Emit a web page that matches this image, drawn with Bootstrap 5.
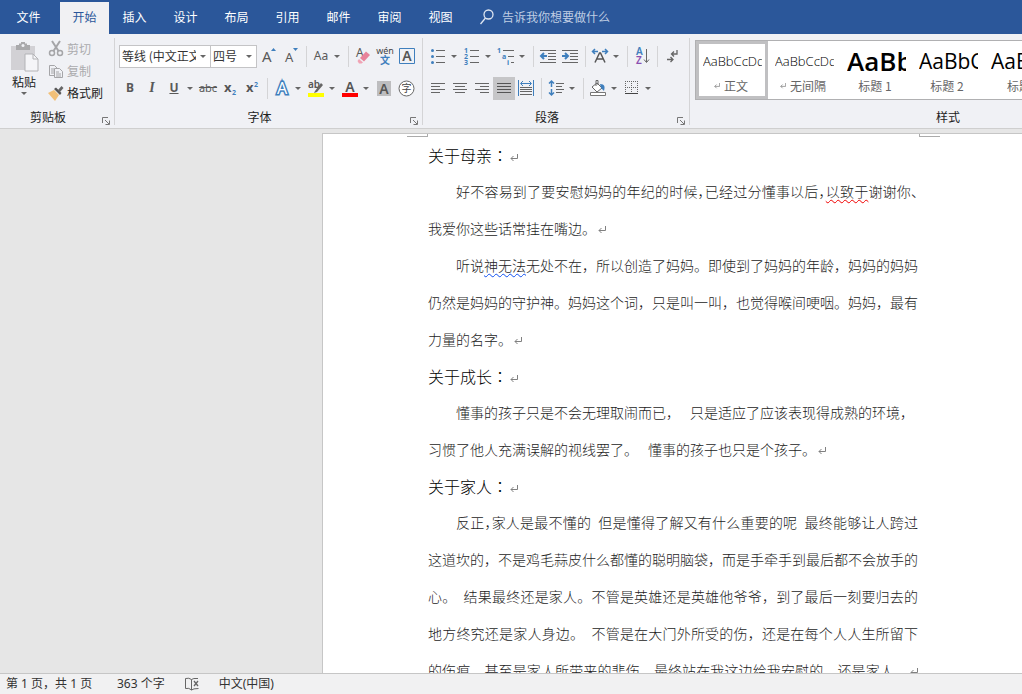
<!DOCTYPE html>
<html lang="zh-CN">
<head>
<meta charset="utf-8">
<meta name="viewport" content="width=device-width, initial-scale=1">
<title>Word</title>
<link href="https://cdn.jsdelivr.net/npm/bootstrap@5.3.0/dist/css/bootstrap.min.css" rel="stylesheet">
<script src="https://cdn.jsdelivr.net/npm/bootstrap@5.3.0/dist/js/bootstrap.bundle.min.js"></script>
<style>
  :root { --blue:#2b579a; --ink:#595959; --accent:#3f7fbd; --line:#d4d4d6; }
  body { font-family:"Noto Sans CJK SC",sans-serif; font-size:12px; line-height:16px; color:#222; background:#e6e6e6; }
  button { font:inherit; color:inherit; }
  svg { display:block; flex:none; overflow:visible; }
  svg text { font-family:"Noto Sans","Noto Sans CJK SC",sans-serif; }

  /* tab strip */
  .tabstrip { background:var(--blue); height:34px; }
  .tabstrip .nav-link { width:51px; padding:0; height:32px; line-height:30px; color:#fff; text-align:center; border-radius:0; }
  .tabstrip .nav-link.file-tab { width:57px; margin-right:3px; }
  .tabstrip .nav-link.active { width:49px; background:#f1f1f3; color:var(--blue); }
  .tellme { color:#bfcde3; padding-left:13px; gap:7px; }
  .tellme input { width:140px; padding:0; border:0; outline:0; background:none; color:inherit; }
  .tellme input::placeholder { color:#bfcde3; opacity:1; }

  /* ribbon */
  .ribbon { background:#f0f1f5; height:95px; border-bottom:1px solid #cfcfcf; padding-top:4px; }
  .rgroup { position:relative; border-right:1px solid var(--line); height:87px; }
  .rgroup .caption { position:absolute; left:0; right:0; bottom:0; text-align:center; }
  .launcher { position:absolute; right:4px; bottom:0; padding:0; border:0; background:none; }
  .clip-group { width:115px; }
  .clip-group .caption { right:18px; }
  .font-group { width:308px; padding-left:4px; }
  .font-group .caption { right:18px; }
  .para-group { width:267px; padding-left:4px; }
  .para-group .caption { right:18px; }
  .style-group { width:516px; padding:2px 0 0 5px; border-right:0; }
  .tool-row { height:32px; padding-top:4px; }
  .tb { width:22px; height:23px; padding:0; border:0; background:none; color:var(--ink); display:flex; align-items:center; justify-content:center; font-family:"Noto Sans",sans-serif; flex:none; }
  .tb.on { background:#c6c6c8; }
  .tb .italic-mark { font-family:"Liberation Serif",serif; font-size:14px; font-weight:bold; }
  .tb .strike-mark { font-size:11px; }
  .drop { width:12px; padding-left:2px; justify-content:start; }
  .drop::before, .paste-btn::after { content:""; border:3px solid transparent; border-top-color:#666; border-bottom:0; }
  .vsep { width:8px; height:21px; flex:none; background:linear-gradient(var(--line),var(--line)) center/1px 100% no-repeat; }
  .combo { position:relative; height:23px; margin-right:-1px; }
  .combo select { appearance:none; width:100%; height:23px; padding:0 14px 0 2px; border:1px solid #c4c4c6; border-radius:0; background:#fff; color:#333; overflow:hidden; }
  .combo::after { content:""; position:absolute; right:5px; top:10px; border:3px solid transparent; border-top-color:#666; border-bottom:0; pointer-events:none; }
  .combo-font { width:92px; } .combo-size { width:47px; margin-right:1px; }
  .paste-btn { width:48px; padding:2px 0 0 0; border:0; background:none; display:flex; flex-direction:column; align-items:center; gap:2px; }
  .clip-btn { height:22px; padding:0; border:0; background:none; display:flex; align-items:center; gap:3px; }
  .clip-btn:disabled { color:#ababad; }

  .gallery { background:#fff; border:1px solid #b0b0b2; height:60px; }
  .style-item { width:72px; height:58px; padding:0 4px 1px; border:3px solid transparent; background:none; display:flex; flex-direction:column; justify-content:end; flex:none; color:#666; }
  .style-item.on { border-color:#c0c0c2; }
  .sample { width:59px; height:34px; line-height:34px; overflow:hidden; white-space:nowrap; text-align:left; color:#000; font-family:"Open Sans",sans-serif; font-size:13px; font-weight:300; }
  .sample.h-one { font-size:26px; font-weight:600; }
  .sample.h-two { font-size:21px; font-weight:400; }
  .style-name { width:56px; height:20px; line-height:18px; display:flex; align-items:center; justify-content:center; gap:4px; white-space:nowrap; }

  /* document */
  .workspace { padding-top:4px; }
  .sheet { width:700px; flex:none; background:#fff; border:1px solid #c6c6c6; border-width:1px 0 0 1px; padding:3px 105px 0; position:relative; color:#1c1c1c; font-size:14px; font-weight:300; }
  .sheet::before, .sheet::after { content:""; position:absolute; top:0; width:21px; height:3px; border:1px solid #ababab; border-top:0; }
  .sheet::before { left:84px; border-left:0; }
  .sheet::after { left:596px; border-right:0; }
  .sheet h2 { margin:0; height:36px; line-height:36px; font-size:16px; font-weight:300; color:#000; white-space:nowrap; }
  .sheet p { margin:0; width:490px; }
  .ln { display:block; height:37px; line-height:37px; white-space:nowrap; }
  .full { text-align:justify; text-align-last:justify; }
  .indent { padding-left:28px; }
  .half { font-feature-settings:"halt"; }
  .colon { font-family:"Noto Sans CJK JP",sans-serif; }
  .ret { display:inline-block; margin-left:2px; }
  .wave { text-decoration:underline wavy 1px; text-underline-offset:2px; text-decoration-skip-ink:none; }
  .wave-red { text-decoration-color:#f00000; }
  .wave-blue { text-decoration-color:#1050f0; }

  .statusbar { height:21px; background:#f1f1f2; border-top:1px solid #c6c6c6; padding-left:6px; gap:20px; color:#333; font-family:"Noto Sans","Noto Sans CJK SC",sans-serif; }
  .statusbar .pages { min-width:91px; }
</style>
</head>
<body class="vh-100 overflow-hidden d-flex flex-column">
<svg width="0" height="0" class="position-absolute">
  <symbol id="ret" viewBox="0 0 8 8"><path d="M7.500 0v4.500H1M3.500 2L1 4.500 3.500 7" fill="none" stroke="#808080"/></symbol>
  <symbol id="launch" viewBox="0 0 8 8"><path d="M.5 6V.5H6M3 3l4 4M7.500 3.500v4h-4" fill="none" stroke="#777"/></symbol>
</svg>

<nav class="tabstrip nav flex-nowrap align-items-end flex-shrink-0">
  <a class="nav-link file-tab" href="#">文件</a>
  <a class="nav-link active" href="#">开始</a>
  <a class="nav-link" href="#">插入</a>
  <a class="nav-link" href="#">设计</a>
  <a class="nav-link" href="#">布局</a>
  <a class="nav-link" href="#">引用</a>
  <a class="nav-link" href="#">邮件</a>
  <a class="nav-link" href="#">审阅</a>
  <a class="nav-link" href="#">视图</a>
  <label class="tellme d-flex align-items-center align-self-center">
    <svg width="16" height="16" viewBox="0 0 16 16" fill="none" stroke="#dfe6f1" stroke-width="1.300"><circle cx="9.500" cy="5.500" r="4.500"/><path d="M6.500 9L1.500 15"/></svg>
    <input type="text" placeholder="告诉我你想要做什么" aria-label="告诉我你想要做什么">
  </label>
</nav>

<header class="ribbon d-flex flex-shrink-0 overflow-hidden">
  <section class="rgroup clip-group flex-shrink-0 d-flex align-items-start">
    <button class="paste-btn" type="button">
      <svg width="30" height="32" viewBox="0 0 30 32"><path d="M2 6h24v24H2z" fill="#d2d1d5"/><path d="M7 5h3V3.500h2V2h4v1.500h2V5h3v5H7z" fill="#a9a9ab"/><circle cx="14" cy="5.500" r="1.500" fill="#f0f1f5"/><path d="M16 14h8l5 5v12H16z" fill="#f5f5f8" stroke="#b3b3b6"/><path d="M24 14v5h5" fill="none" stroke="#b3b3b6"/></svg>
      <span>粘贴</span>
    </button>
    <div>
      <button class="clip-btn" type="button" disabled>
        <svg width="16" height="16" viewBox="0 0 16 16" fill="none" stroke="#a5a5a8" stroke-width="1.500"><path d="M4 0l6.500 10M12 0L5.500 10" stroke-width="2"/><circle cx="4" cy="12" r="2.500"/><circle cx="12" cy="12" r="2.500"/></svg>剪切</button>
      <button class="clip-btn" type="button" disabled>
        <svg width="16" height="16" viewBox="0 0 16 16" fill="#f0f1f5" stroke="#a5a5a8"><path d="M1.500 2.500h5l3 3v7h-8z"/><path d="M3 6h3M3 8h3M3 10h3"/><path d="M6.500 5.500h5l3 3v6h-8z"/><path d="M8 9h3M8 11h5M8 13h5"/></svg>复制</button>
      <button class="clip-btn" type="button">
        <svg width="16" height="16" viewBox="0 0 16 16"><path d="M0 8l6-3 5 5-4 6z" fill="#f2c078"/><path d="M6 4l2-1.500 5.500 5.500L12 10z" fill="#555"/><path d="M10 5l3.500-4 2 2L12 7z" fill="#666"/></svg>格式刷</button>
    </div>
    <span class="caption">剪贴板</span>
    <button class="launcher" type="button" aria-label="剪贴板"><svg width="8" height="8"><use href="#launch"/></svg></button>
  </section>

  <section class="rgroup font-group flex-shrink-0">
    <div class="tool-row d-flex align-items-center">
      <div class="combo combo-font"><select aria-label="字体"><option>等线 (中文正文)</option></select></div>
      <div class="combo combo-size"><select aria-label="字号"><option>四号</option></select></div>
      <button class="tb" type="button" aria-label="增大字号"><svg width="18" height="20"><text x="2" y="16" font-size="15" fill="#595959">A</text><path d="M11 5l2.500-3L16 5z" fill="#3f7fbd"/></svg></button>
      <button class="tb" type="button" aria-label="减小字号"><svg width="18" height="20"><text x="3" y="16" font-size="13" fill="#595959">A</text><path d="M11 2h5l-2.500 3z" fill="#3f7fbd"/></svg></button>
      <i class="vsep"></i>
      <button class="tb" type="button" aria-label="更改大小写"><span>Aa</span></button><button class="tb drop" type="button" aria-label="大小写选项"></button>
      <i class="vsep"></i>
      <button class="tb" type="button" aria-label="清除格式"><svg width="18" height="18"><text x="2" y="10" font-size="12" fill="#595959">A</text><path d="M6 11l6-6.500 4 3.500-6 6.500z" fill="#e8829a"/><path d="M5 12l4 3.500-1.500 1H5L3.500 14z" fill="#f0a3b4"/></svg></button>
      <button class="tb" type="button" aria-label="拼音指南"><svg width="18" height="20"><text x="9" y="8" font-size="9" text-anchor="middle" fill="#444">wén</text><text x="4" y="18" font-size="10" fill="#3f7fbd" font-weight="bold">文</text></svg></button>
      <button class="tb" type="button" aria-label="字符边框"><svg width="16" height="16"><path d="M.5.5h15v15H.5z" fill="none" stroke="#3f7fbd"/><text x="8" y="13" font-size="14" font-weight="600" text-anchor="middle" fill="#555">A</text></svg></button>
    </div>
    <div class="tool-row d-flex align-items-center">
      <button class="tb" type="button"><b>B</b></button>
      <button class="tb" type="button"><i class="italic-mark">I</i></button>
      <button class="tb" type="button"><b><u>U</u></b></button><button class="tb drop" type="button" aria-label="下划线选项"></button>
      <button class="tb" type="button"><s class="strike-mark">abc</s></button>
      <button class="tb" type="button" aria-label="下标"><svg width="16" height="16"><text x="2" y="12" font-size="13" font-weight="bold" fill="#555">x</text><text x="10" y="15" font-size="7" font-weight="bold" fill="#3f7fbd">2</text></svg></button>
      <button class="tb" type="button" aria-label="上标"><svg width="16" height="16"><text x="2" y="12" font-size="13" font-weight="bold" fill="#555">x</text><text x="10" y="7" font-size="7" font-weight="bold" fill="#3f7fbd">2</text></svg></button>
      <i class="vsep"></i>
      <button class="tb" type="button" aria-label="文本效果"><svg width="18" height="18"><text x="9" y="15" font-size="16" text-anchor="middle" fill="#fff" stroke="#3f7fbd" stroke-width="3" paint-order="stroke">A</text></svg></button><button class="tb drop" type="button" aria-label="文本效果选项"></button>
      <button class="tb" type="button" aria-label="突出显示"><svg width="18" height="18"><text x="1" y="9" font-size="10" font-weight="600" fill="#555">ab</text><path d="M8 12l6-8 2 2-6 7-3 1z" fill="#666"/><path d="M1 14h16v4H1z" fill="#ff0"/></svg></button><button class="tb drop" type="button" aria-label="突出显示颜色"></button>
      <button class="tb" type="button" aria-label="字体颜色"><svg width="18" height="18"><text x="9" y="13" font-size="14" font-weight="600" text-anchor="middle" fill="#555">A</text><path d="M1 14h16v4H1z" fill="red"/></svg></button><button class="tb drop" type="button" aria-label="字体颜色选项"></button>
      <button class="tb" type="button" aria-label="字符底纹"><svg width="14" height="15"><path d="M0 0h14v15H0z" fill="#bdbdbf"/><text x="7" y="13" font-size="14" font-weight="600" text-anchor="middle" fill="#555">A</text></svg></button>
      <button class="tb" type="button" aria-label="带圈字符"><svg width="17" height="17"><circle cx="8.500" cy="8.500" r="7.500" fill="#fff" stroke="#666"/><text x="8.500" y="12" font-size="10" text-anchor="middle" fill="#444">字</text></svg></button>
    </div>
    <span class="caption">字体</span>
    <button class="launcher" type="button" aria-label="字体设置"><svg width="8" height="8"><use href="#launch"/></svg></button>
  </section>

  <section class="rgroup para-group flex-shrink-0">
    <div class="tool-row d-flex align-items-center">
      <button class="tb" type="button" aria-label="项目符号"><svg width="16" height="16"><path d="M6 2.500h9M6 8.500h9M6 14.500h9" stroke="#666"/><g fill="#3f7fbd"><circle cx="2.500" cy="2.500" r="1.500"/><circle cx="2.500" cy="8.500" r="1.500"/><circle cx="2.500" cy="14.500" r="1.500"/></g></svg></button><button class="tb drop" type="button" aria-label="项目符号库"></button>
      <button class="tb" type="button" aria-label="编号"><svg width="16" height="18"><path d="M6 3.500h9M6 9.500h9M6 15.500h9" stroke="#666"/><g fill="#3f7fbd" font-size="7" font-weight="bold"><text x="0" y="6">1</text><text x="0" y="12">2</text><text x="0" y="18">3</text></g></svg></button><button class="tb drop" type="button" aria-label="编号库"></button>
      <button class="tb" type="button" aria-label="多级列表"><svg width="18" height="18"><path d="M6 3.500h11M11 9.500h6M14 15.500h3" stroke="#666"/><g fill="#3f7fbd" font-size="7" font-weight="bold"><text x="0" y="6">1</text><text x="5" y="12">a</text><text x="10" y="18">i</text></g></svg></button><button class="tb drop" type="button" aria-label="列表库"></button>
      <i class="vsep"></i>
      <button class="tb" type="button" aria-label="减少缩进"><svg width="16" height="14" fill="none"><path d="M0 1.500h16M8 4.500h8M8 7.500h8M8 10.500h8M0 13.500h16" stroke="#666"/><path d="M7 7H1.500M4 4L1 7l3 3" stroke="#3f7fbd" stroke-width="2"/></svg></button>
      <button class="tb" type="button" aria-label="增加缩进"><svg width="16" height="14" fill="none"><path d="M0 1.500h16M8 4.500h8M8 7.500h8M8 10.500h8M0 13.500h16" stroke="#666"/><path d="M0 7h5.500M3 4l3 3-3 3" stroke="#3f7fbd" stroke-width="2"/></svg></button>
      <i class="vsep"></i>
      <button class="tb" type="button" aria-label="中文版式"><svg width="18" height="16" fill="none"><path d="M4 14.500L8.500 5h1L14 14.500M6 11h6" stroke="#555" stroke-width="1.500"/><path d="M7 3.500H2M4 1L1.500 3.500 4 6M11 3.500h5M14 1l2.500 2.500L14 6" stroke="#3f7fbd" stroke-width="1.500"/></svg></button><button class="tb drop" type="button" aria-label="中文版式选项"></button>
      <i class="vsep"></i>
      <button class="tb" type="button" aria-label="排序"><svg width="16" height="18"><text x="2" y="8" font-size="10" font-weight="600" fill="#3f7fbd">A</text><text x="2" y="17" font-size="10" font-weight="600" fill="#8a4fb0">Z</text><path d="M12.500 2v13M10 12.500l2.500 3 2.500-3" fill="none" stroke="#666"/></svg></button>
      <i class="vsep"></i>
      <button class="tb" type="button" aria-label="显示编辑标记"><svg width="12" height="16" fill="none" stroke="#666" stroke-width="1.300"><path d="M11 2v4H6M8 3.500L5.500 6 8 8.500M1 11.500h6M4.500 9L7 11.500 4.500 14"/></svg></button>
    </div>
    <div class="tool-row d-flex align-items-center">
      <button class="tb" type="button" aria-label="左对齐"><svg width="14" height="13"><path d="M0 1.500h14M0 4.500h9M0 7.500h14M0 10.500h9" stroke="#666"/></svg></button>
      <button class="tb" type="button" aria-label="居中"><svg width="14" height="13"><path d="M0 1.500h14M2 4.500h10M0 7.500h14M2 10.500h10" stroke="#666"/></svg></button>
      <button class="tb" type="button" aria-label="右对齐"><svg width="14" height="13"><path d="M0 1.500h14M5 4.500h9M0 7.500h14M5 10.500h9" stroke="#666"/></svg></button>
      <button class="tb on" type="button" aria-label="两端对齐"><svg width="14" height="13"><path d="M0 1.500h14M0 4.500h14M0 7.500h14M0 10.500h14" stroke="#555"/></svg></button>
      <button class="tb" type="button" aria-label="分散对齐"><svg width="16" height="16" fill="none"><path d="M.5 0v16M15.500 0v16M3 3.500h10M5 1L2.500 3.500 5 6M11 1l2.500 2.500L11 6" stroke="#3f7fbd"/><path d="M2 7.500h12M2 9.500h12M2 11.500h12M2 14.500h12" stroke="#666"/></svg></button>
      <i class="vsep"></i>
      <button class="tb" type="button" aria-label="行距"><svg width="16" height="16" fill="none"><path d="M3.500 1v6M1 3.500L3.500 1 6 3.500M3.500 9v6M1 12.500L3.500 15 6 12.500" stroke="#3f7fbd" stroke-width="1.500"/><path d="M8 3.500h8M8 6.500h6M8 9.500h8M8 12.500h6" stroke="#666"/></svg></button><button class="tb drop" type="button" aria-label="行距选项"></button>
      <i class="vsep"></i>
      <button class="tb" type="button" aria-label="底纹"><svg width="18" height="16"><path d="M3 7l5-4 5 5-5 4z" fill="#fff" stroke="#666"/><path d="M7 6V.5h2V5" fill="none" stroke="#666"/><path d="M11 4c5 0 5 3 4 7l-3-3z" fill="#3f7fbd"/><path d="M1.500 12.500h15v3h-15z" fill="#fff" stroke="#777"/></svg></button><button class="tb drop" type="button" aria-label="底纹颜色"></button>
      <button class="tb" type="button" aria-label="边框"><svg width="14" height="14" fill="none"><path d="M.5 0v12M6.500 0v12M12.500 0v12M0 .5h13M0 6.500h13" stroke="#666" stroke-dasharray="1 1"/><path d="M0 12.500h13" stroke="#444"/></svg></button><button class="tb drop" type="button" aria-label="边框选项"></button>
    </div>
    <span class="caption">段落</span>
    <button class="launcher" type="button" aria-label="段落设置"><svg width="8" height="8"><use href="#launch"/></svg></button>
  </section>

  <section class="rgroup style-group flex-shrink-0">
    <div class="gallery d-flex overflow-hidden">
      <button class="style-item on" type="button"><span class="sample">AaBbCcDd</span><span class="style-name"><svg width="6" height="6"><use href="#ret"/></svg>正文</span></button>
      <button class="style-item" type="button"><span class="sample">AaBbCcDd</span><span class="style-name"><svg width="6" height="6"><use href="#ret"/></svg>无间隔</span></button>
      <button class="style-item" type="button"><span class="sample h-one">AaBb</span><span class="style-name">标题 1</span></button>
      <button class="style-item" type="button"><span class="sample h-two">AaBbC</span><span class="style-name">标题 2</span></button>
      <button class="style-item" type="button"><span class="sample h-two">AaBbC</span><span class="style-name">标题</span></button>
    </div>
    <span class="caption">样式</span>
  </section>
</header>

<main class="workspace d-flex justify-content-end flex-grow-1 overflow-hidden">
  <article class="sheet">
    <h2>关于母亲<span class="colon" lang="ja">：</span><svg class="ret" width="8" height="8"><use href="#ret"/></svg></h2>
    <p>
      <span class="ln full indent">好不容易到了要安慰妈妈的年纪的时候<span class="half">，</span>已经过分懂事以后<span class="half">，</span><span class="wave wave-red">以致于</span>谢谢你<span class="half">、</span></span>
      <span class="ln">我爱你这些话常挂在嘴边。<svg class="ret" width="8" height="8"><use href="#ret"/></svg></span>
    </p>
    <p>
      <span class="ln full indent">听说<span class="wave wave-blue">神无法</span>无处不在，所以创造了妈妈。即使到了妈妈的年龄，妈妈的妈妈</span>
      <span class="ln full">仍然是妈妈的守护神。妈妈这个词，只是叫一叫，也觉得喉间哽咽。妈妈，最有</span>
      <span class="ln">力量的名字。<svg class="ret" width="8" height="8"><use href="#ret"/></svg></span>
    </p>
    <h2>关于成长<span class="colon" lang="ja">：</span><svg class="ret" width="8" height="8"><use href="#ret"/></svg></h2>
    <p>
      <span class="ln indent">懂事的孩子只是不会无理取闹而已，&ensp;&nbsp;只是适应了应该表现得成熟的环境，</span>
      <span class="ln">习惯了他人充满误解的视线罢了。&ensp;&nbsp;懂事的孩子也只是个孩子。<svg class="ret" width="8" height="8"><use href="#ret"/></svg></span>
    </p>
    <h2>关于家人<span class="colon" lang="ja">：</span><svg class="ret" width="8" height="8"><use href="#ret"/></svg></h2>
    <p>
      <span class="ln full indent">反正<span class="half">，</span>家人是最不懂的&ensp;但是懂得了解又有什么重要的呢&ensp;最终能够让人跨过</span>
      <span class="ln full">这道坎的，不是鸡毛蒜皮什么都懂的聪明脑袋，而是手牵手到最后都不会放手的</span>
      <span class="ln full">心。&ensp;结果最终还是家人。不管是英雄还是英雄他爷爷，到了最后一刻要归去的</span>
      <span class="ln full">地方终究还是家人身边。&ensp;不管是在大门外所受的伤，还是在每个人人生所留下</span>
      <span class="ln full">的伤痕，甚至是家人所带来的悲伤，最终站在我这边给我安慰的，还是家人。<svg class="ret" width="8" height="8"><use href="#ret"/></svg></span>
    </p>
  </article>
</main>

<footer class="statusbar d-flex align-items-center flex-shrink-0">
  <span class="pages">第 1 页，共 1 页</span>
  <span>363 个字</span>
  <svg width="14" height="14" viewBox="0 0 14 14" fill="none" stroke="#666"><path d="M6.500 2.500Q4 .5.500 1.500v10q3.500-1 6 1.500Q8 11.500 13.500 11.500M6.500 2.500V13M6.500 2.500Q8 1 13 1.500"/><path d="M9 4l4 5M13 4L9 9" stroke-width="1.300"/></svg>
  <span>中文(中国)</span>
</footer>
</body>
</html>
